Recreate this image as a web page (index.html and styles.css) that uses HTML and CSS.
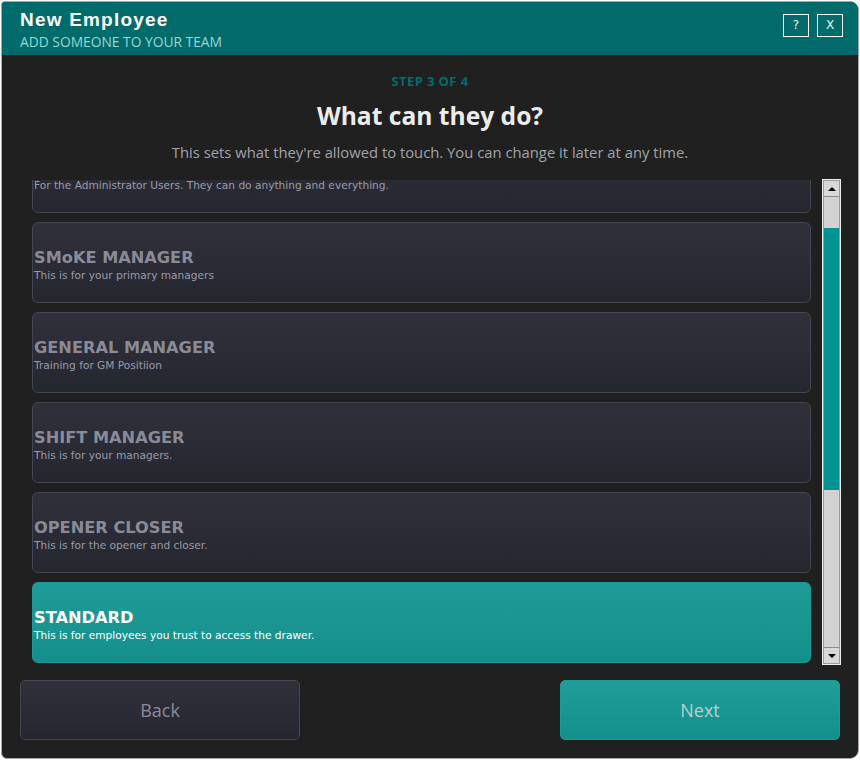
FILE: index.html
```html
<!DOCTYPE html>
<html>
<head>
<meta charset="utf-8">
<title>New Employee</title>
<link rel="stylesheet" href="styles.css">
</head>
<body>
<div class="window">
  <header class="titlebar">
    <div class="titles">
      <div class="title">New Employee</div>
      <div class="subtitle">ADD SOMEONE TO YOUR TEAM</div>
    </div>
    <div class="tb-buttons">
      <div class="tb-btn">?</div>
      <div class="tb-btn">X</div>
    </div>
  </header>
  <main class="body">
    <div class="step">STEP 3 OF 4</div>
    <h1 class="heading">What can they do?</h1>
    <p class="lead">This sets what they're allowed to touch. You can change it later at any time.</p>
    <div class="list-row">
      <div class="list-view">
        <div class="list">
          <div class="card">
            <div class="card-title">ADMINISTRATOR</div>
            <div class="card-desc">For the Administrator Users. They can do anything and everything.</div>
          </div>
          <div class="card">
            <div class="card-title">SMoKE MANAGER</div>
            <div class="card-desc">This is for your primary managers</div>
          </div>
          <div class="card">
            <div class="card-title">GENERAL MANAGER</div>
            <div class="card-desc">Training for GM Positiion</div>
          </div>
          <div class="card">
            <div class="card-title">SHIFT MANAGER</div>
            <div class="card-desc">This is for your managers.</div>
          </div>
          <div class="card">
            <div class="card-title">OPENER CLOSER</div>
            <div class="card-desc">This is for the opener and closer.</div>
          </div>
          <div class="card selected">
            <div class="card-title">STANDARD</div>
            <div class="card-desc">This is for employees you trust to access the drawer.</div>
          </div>
        </div>
      </div>
      <div class="scrollbar">
        <div class="sb-btn"><span class="tri up"></span></div>
        <div class="sb-track">
          <div class="sb-before"></div>
          <div class="sb-thumb"></div>
        </div>
        <div class="sb-btn down"><span class="tri dn"></span></div>
      </div>
    </div>
    <div class="actions">
      <button class="btn back">Back</button>
      <button class="btn next">Next</button>
    </div>
  </main>
</div>
</body>
</html>
```
FILE: styles.css
```css
html, body {
  margin: 0;
  padding: 0;
  background: #ffffff;
}
.window {
  box-sizing: border-box;
  width: 858px;
  height: 758px;
  margin: 1px;
  border: 1px solid #a8a8a8;
  border-radius: 4px 9px 9px 6px;
  background: #202020;
  overflow: hidden;
  display: flex;
  flex-direction: column;
}
.titlebar {
  height: 53px;
  background: #006b6a;
  display: flex;
  justify-content: space-between;
  align-items: flex-start;
  padding: 0 15px 0 18px;
  flex: none;
}
.titles {
  padding-top: 8px;
}
.title {
  font-family: "Liberation Sans", Arial, sans-serif;
  font-weight: bold;
  font-size: 19px;
  line-height: 20px;
  color: #ffffff;
  letter-spacing: 1.2px;
}
.subtitle {
  font-family: "Open Sans", sans-serif;
  font-size: 13.8px;
  line-height: 18px;
  margin-top: 3px;
  color: #9ad6d4;
}
.tb-buttons {
  display: flex;
  gap: 8px;
  padding-top: 12px;
}
.tb-btn {
  box-sizing: border-box;
  width: 26px;
  height: 23px;
  border: 1px solid #ffffff;
  color: #e8f4f4;
  font-family: "DejaVu Sans", sans-serif;
  font-size: 12px;
  line-height: 21px;
  text-align: center;
}
.body {
  flex: 1;
  display: flex;
  flex-direction: column;
  padding: 0 18px 18px 18px;
}
.step {
  margin-top: 18px;
  text-align: center;
  font-family: "Open Sans", sans-serif;
  font-weight: bold;
  font-size: 13px;
  line-height: 16px;
  letter-spacing: 0.4px;
  color: #006e6c;
}
.heading {
  margin: 12px 0 0;
  text-align: center;
  font-family: "Open Sans", sans-serif;
  font-weight: bold;
  font-size: 24.6px;
  line-height: 30px;
  color: #ececec;
}
.lead {
  margin: 11px 0 0;
  text-align: center;
  font-family: "Open Sans", sans-serif;
  font-size: 14.8px;
  line-height: 20px;
  color: #a2a3ad;
}
.list-row {
  margin-top: 18px;
  height: 484px;
  display: flex;
  gap: 12px;
  padding-left: 12px;
}
.list-view {
  flex: 1;
  overflow: hidden;
}
.list {
  margin-top: -48px;
  display: flex;
  flex-direction: column;
  gap: 9px;
}
.card {
  box-sizing: border-box;
  height: 81px;
  border: 1px solid #45464f;
  border-radius: 6px;
  background: linear-gradient(#30303b, #25272f);
  display: flex;
  flex-direction: column;
  justify-content: center;
  padding: 5px 1px 0;
}
.card-title {
  font-family: "DejaVu Sans", Verdana, sans-serif;
  font-weight: bold;
  font-size: 16.2px;
  line-height: 19px;
  color: #898b98;
}
.card-desc {
  margin-top: 1px;
  font-family: "DejaVu Sans", Verdana, sans-serif;
  font-size: 10.6px;
  line-height: 15px;
  color: #9a9ca8;
}
.card.selected {
  border-color: #1d9a96;
  background: linear-gradient(#209c98, #148f8c);
}
.card.selected .card-title,
.card.selected .card-desc {
  color: #ffffff;
}
.scrollbar {
  box-sizing: border-box;
  width: 17px;
  border: 1px solid #9a9a9a;
  outline: 1px solid #eeeeee;
  outline-offset: 0;
  background: #d2d2d2;
  display: flex;
  flex-direction: column;
}
.sb-btn {
  height: 15px;
  flex: none;
  background: #d8d8d8;
  border-bottom: 1px solid #8a8a8a;
  display: flex;
  align-items: center;
  justify-content: center;
}
.sb-btn.down {
  border-bottom: none;
  border-top: 1px solid #8a8a8a;
}
.tri {
  width: 0;
  height: 0;
  border-left: 4px solid transparent;
  border-right: 4px solid transparent;
}
.tri.up { border-bottom: 4px solid #000; }
.tri.dn { border-top: 4px solid #000; }
.sb-track {
  flex: 1;
  display: flex;
  flex-direction: column;
}
.sb-before { height: 31px; }
.sb-thumb {
  height: 262px;
  background: #009390;
}
.actions {
  margin-top: 16px;
  display: flex;
  justify-content: space-between;
}
.btn {
  box-sizing: border-box;
  width: 280px;
  height: 60px;
  border-radius: 5px;
  font-family: "Open Sans", sans-serif;
  font-size: 18px;
  cursor: pointer;
}
.btn.back {
  border: 1px solid #45464f;
  background: linear-gradient(#30303b, #25272f);
  color: #8a8c98;
}
.btn.next {
  border: 1px solid #1d9a96;
  background: linear-gradient(#219d99, #138f8c);
  color: #b7cfcf;
}
```
